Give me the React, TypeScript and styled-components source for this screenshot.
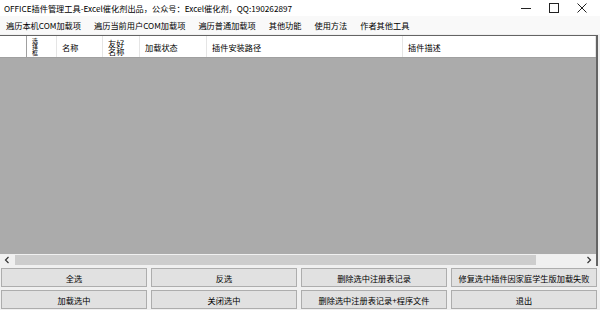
import styled, { createGlobalStyle } from 'styled-components';

const GlobalStyle = createGlobalStyle`
  html, body {
    margin: 0;
    padding: 0;
    background: #f0f0f0;
    font-family: "Noto Sans CJK SC", "Noto Sans", sans-serif;
  }
`;

const MENU_ITEMS = [
  '遍历本机COM加载项',
  '遍历当前用户COM加载项',
  '遍历普通加载项',
  '其他功能',
  '使用方法',
  '作者其他工具',
];

const COLUMNS = [
  { title: '' },
  { title: '选择框', narrow: true },
  { title: '名称' },
  { title: '友好名称', wrap: true },
  { title: '加载状态' },
  { title: '插件安装路径' },
  { title: '插件描述' },
];

const BUTTONS = [
  '全选',
  '反选',
  '删除选中注册表记录',
  '修复选中插件因家庭学生版加载失败',
  '加载选中',
  '关闭选中',
  '删除选中注册表记录+程序文件',
  '退出',
];

const App = () => {
  return (
    <Window>
      <GlobalStyle />
      <TitleBar>
        <TitleText>OFFICE插件管理工具-Excel催化剂出品，公众号：Excel催化剂，QQ:190262897</TitleText>
        <WinControls>
          <WinButton>
            <svg width="10" height="10" viewBox="0 0 10 10">
              <line x1="0" y1="5.5" x2="10" y2="5.5" stroke="#222" strokeWidth="1" />
            </svg>
          </WinButton>
          <WinButton>
            <svg width="10" height="10" viewBox="0 0 10 10">
              <rect x="0.5" y="0.5" width="9" height="9" fill="none" stroke="#222" strokeWidth="1" />
            </svg>
          </WinButton>
          <WinButton>
            <svg width="10" height="10" viewBox="0 0 10 10">
              <path d="M0.5 0.5 L9.5 9.5 M9.5 0.5 L0.5 9.5" stroke="#222" strokeWidth="1" />
            </svg>
          </WinButton>
        </WinControls>
      </TitleBar>

      <MenuBar>
        {MENU_ITEMS.map((m) => (
          <MenuItem key={m}>{m}</MenuItem>
        ))}
      </MenuBar>

      <Grid>
        <HeaderRow>
          {COLUMNS.map((c, i) => (
            <HeaderCell key={i}>
              {c.narrow ? (
                <NarrowText>{c.title}</NarrowText>
              ) : c.wrap ? (
                <WrapText>{c.title}</WrapText>
              ) : (
                c.title
              )}
            </HeaderCell>
          ))}
        </HeaderRow>
        <GridBody />
        <HScroll>
          <ScrollArrow>
            <svg width="6" height="8" viewBox="0 0 6 8">
              <path d="M4.5 1 L1.5 4 L4.5 7" fill="none" stroke="#333" strokeWidth="1.2" />
            </svg>
          </ScrollArrow>
          <ScrollTrack>
            <ScrollThumb />
          </ScrollTrack>
          <ScrollArrow>
            <svg width="6" height="8" viewBox="0 0 6 8">
              <path d="M1.5 1 L4.5 4 L1.5 7" fill="none" stroke="#333" strokeWidth="1.2" />
            </svg>
          </ScrollArrow>
        </HScroll>
      </Grid>

      <ButtonGrid>
        {BUTTONS.map((b) => (
          <ActionButton key={b}>{b}</ActionButton>
        ))}
      </ButtonGrid>
    </Window>
  );
};

export default App;

const Window = styled.div`
  width: 600px;
  height: 310px;
  display: flex;
  flex-direction: column;
  background: #f0f0f0;
  overflow: hidden;
`;

const TitleBar = styled.div`
  height: 16px;
  background: #ffffff;
  display: flex;
  align-items: center;
  justify-content: space-between;
  padding: 0 4px 0 4px;
`;

const TitleText = styled.span`
  font-size: 8.2px;
  color: #000;
  white-space: nowrap;
`;

const WinControls = styled.div`
  display: flex;
  align-items: center;
  height: 100%;
`;

const WinButton = styled.div`
  width: 28px;
  height: 16px;
  display: flex;
  align-items: center;
  justify-content: center;
`;

const MenuBar = styled.div`
  height: 18px;
  display: flex;
  align-items: center;
  gap: 13px;
  padding-left: 6px;
  background: #f9f9f9;
`;

const MenuItem = styled.span`
  font-size: 8.2px;
  color: #000;
  white-space: nowrap;
`;

const Grid = styled.div`
  flex: 1;
  display: flex;
  flex-direction: column;
  margin: 1px 2px 0 0;
  border-top: 1px solid #646464;
  border-right: 2px solid #646464;
  background: #ababab;
`;

const HeaderRow = styled.div`
  height: 21px;
  display: grid;
  grid-template-columns: 27px 30px 46px 37px 67px 196px 1fr;
  background: #ffffff;
  border-bottom: 1px solid #a0a0a0;
`;

const HeaderCell = styled.div`
  display: flex;
  align-items: center;
  padding-left: 5px;
  border-right: 1px solid #e5e5e5;
  font-size: 8.2px;
  color: #000;
  white-space: nowrap;
  overflow: hidden;

  &:first-child {
    border-right: 1px solid #a0a0a0;
  }
`;

const NarrowText = styled.div`
  width: 7px;
  font-size: 6px;
  line-height: 6px;
  white-space: normal;
  word-break: break-all;
`;

const WrapText = styled.div`
  width: 18px;
  font-size: 8.2px;
  line-height: 8px;
  white-space: normal;
  word-break: break-all;
`;

const GridBody = styled.div`
  flex: 1;
  background: #ababab;
`;

const HScroll = styled.div`
  height: 12px;
  display: flex;
  align-items: stretch;
  background: #f0f0f0;
`;

const ScrollArrow = styled.div`
  width: 14px;
  display: flex;
  align-items: center;
  justify-content: center;
`;

const ScrollTrack = styled.div`
  flex: 1;
  display: flex;
  align-items: center;
  padding: 0 1px;
`;

const ScrollThumb = styled.div`
  width: 92%;
  height: 10px;
  background: #cdcdcd;
`;

const ButtonGrid = styled.div`
  display: grid;
  grid-template-columns: repeat(4, 1fr);
  grid-auto-rows: 19px;
  gap: 3px 4px;
  padding: 2px 3px 1px 1px;
`;

const ActionButton = styled.button`
  font-family: "Noto Sans CJK SC", "Noto Sans", sans-serif;
  font-size: 8.2px;
  color: #000;
  background: #e1e1e1;
  border: 1px solid #adadad;
  border-radius: 0;
  padding: 0;
  white-space: nowrap;
  cursor: pointer;
`;
